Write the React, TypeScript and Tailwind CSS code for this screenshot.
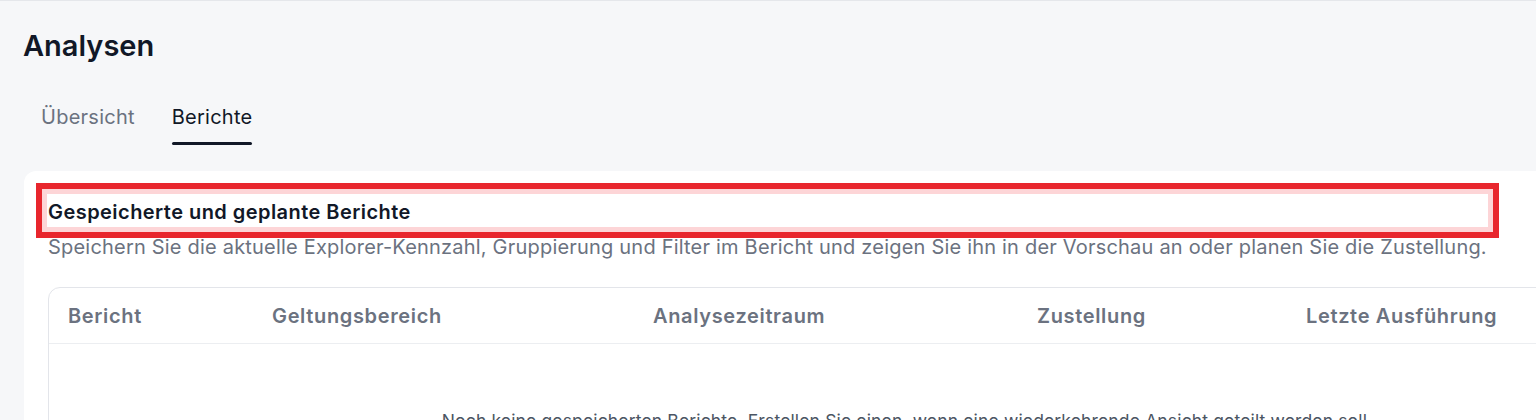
const columns = [
  { label: 'Bericht', width: 'w-[204px]' },
  { label: 'Geltungsbereich', width: 'w-[381px]' },
  { label: 'Analysezeitraum', width: 'w-[384px]' },
  { label: 'Zustellung', width: 'w-[269px]' },
  { label: 'Letzte Ausführung', width: 'w-[480px]' },
]

function Tabs() {
  const tabs = ['Übersicht', 'Berichte']
  const active = 'Berichte'
  return (
    <div className="flex gap-[37px] pl-[41px] mt-[39px]">
      {tabs.map((tab) => (
        <button key={tab} className="flex flex-col items-stretch">
          <span
            className={
              tab === active
                ? 'text-[20px] leading-7 tracking-[0.25px] text-[#111827]'
                : 'text-[20px] leading-7 tracking-[0.25px] text-[#6b7280]'
            }
          >
            {tab}
          </span>
          <span
            className={
              tab === active
                ? 'mt-[11px] h-[3px] rounded-full bg-[#111827]'
                : 'mt-[11px] h-[3px] rounded-full bg-transparent'
            }
          />
        </button>
      ))}
    </div>
  )
}

function ReportsTable() {
  return (
    <div className="mt-[26px] w-[1718px] rounded-xl border border-[#e3e5ea] bg-white">
      <div className="flex h-[56px] items-center border-b border-[#eceef1]">
        {columns.map((col) => (
          <div
            key={col.label}
            className={`${col.width} shrink-0 pl-[19px] text-[20px] font-semibold tracking-[0.65px] text-[#6b7280]`}
          >
            {col.label}
          </div>
        ))}
      </div>
      <div className="py-[64px] text-center text-[17.5px] tracking-[0.15px] text-[#4b5563]">
        Noch keine gespeicherten Berichte. Erstellen Sie einen, wenn eine wiederkehrende Ansicht geteilt werden soll.
      </div>
    </div>
  )
}

export default function App() {
  return (
    <div
      className="h-[420px] w-full overflow-hidden border-t border-[#e5e7eb] bg-[#f6f7f9]"
      style={{ fontFamily: 'Inter, "Noto Sans", sans-serif' }}
    >
      <div className="pl-[23px] pt-[27px]">
        <h1 className="text-[29px] font-semibold leading-9 text-[#111827]">
          Analysen
        </h1>
      </div>
      <Tabs />
      <div className="ml-6 mt-[26px] w-[1766px] rounded-tl-xl bg-white px-6 pt-[27px]">
        <div className="relative">
          <h2 className="text-[20px] font-semibold leading-7 tracking-[0.45px] text-[#111827]">
            Gespeicherte und geplante Berichte
          </h2>
          {/* annotation highlight */}
          <span className="pointer-events-none absolute left-[-12px] top-[-15px] h-[55px] w-[1463px] border-[6px] border-[#e8262d]">
            <span className="block h-full w-full border-[5px] border-[#fdd5d7]" />
          </span>
        </div>
        <p className="mt-[7px] text-[20px] leading-7 tracking-[0.2px] text-[#6b7280]">
          Speichern Sie die aktuelle Explorer-Kennzahl, Gruppierung und Filter im Bericht und zeigen Sie ihn in der Vorschau an oder planen Sie die Zustellung.
        </p>
        <ReportsTable />
      </div>
    </div>
  )
}
